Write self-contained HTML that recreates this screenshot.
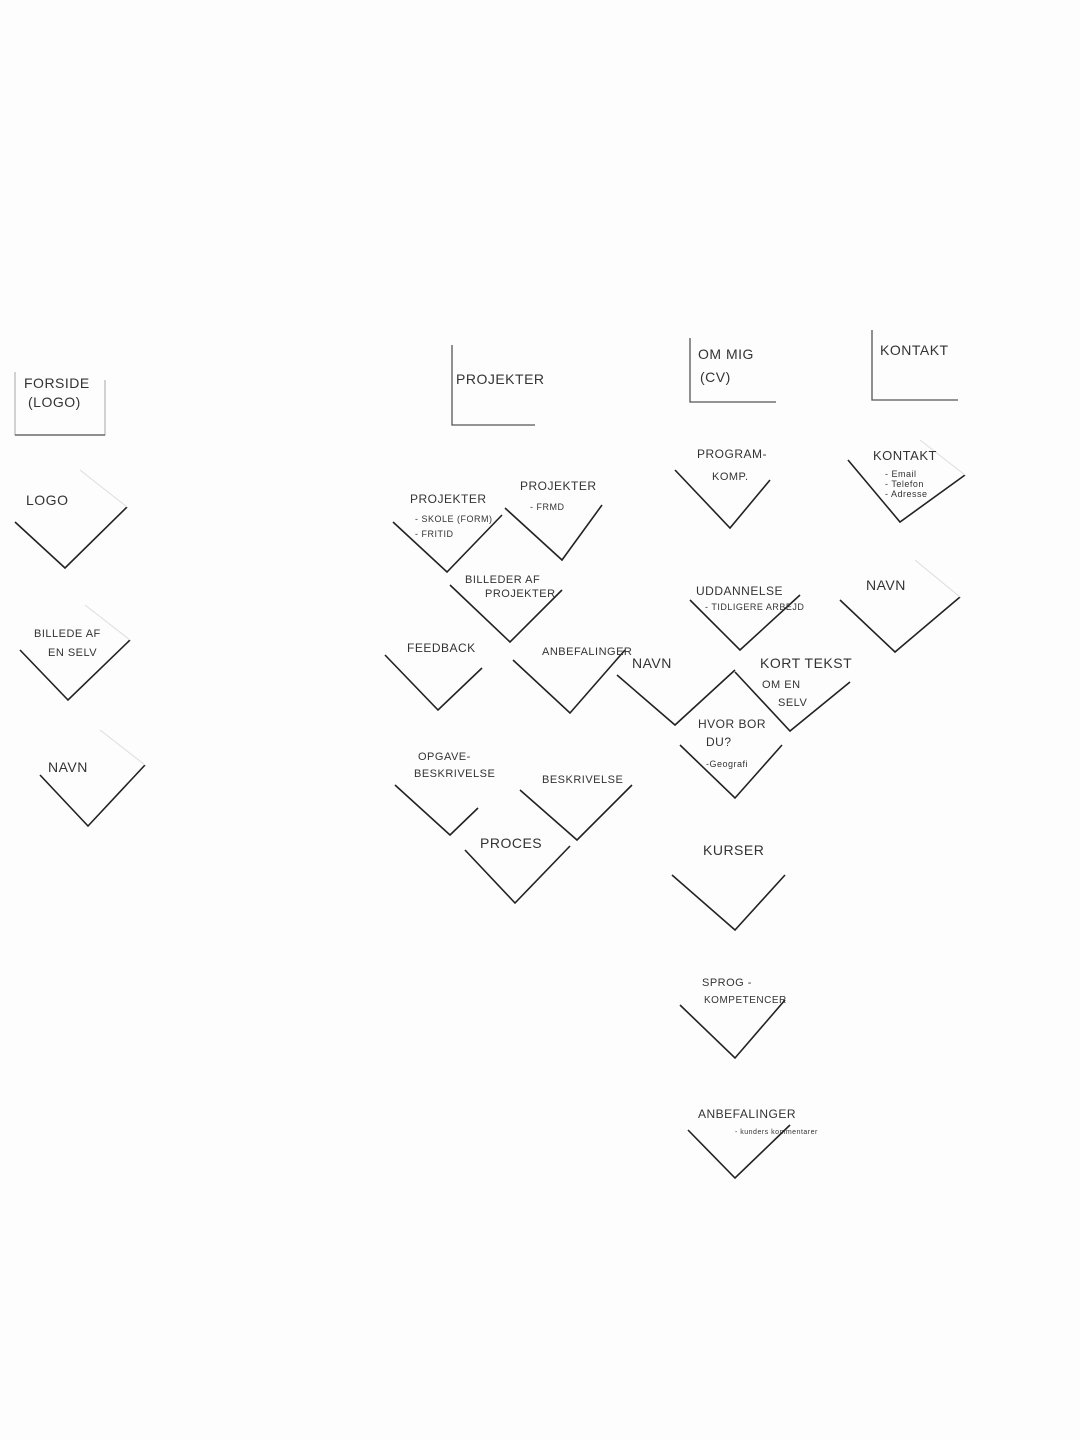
<!DOCTYPE html>
<html><head><meta charset="utf-8"><style>
html,body{margin:0;padding:0;background:#fdfdfd;}
svg{display:block}
text{font-family:"Liberation Sans",sans-serif;fill:#333;font-size:14px;letter-spacing:0.5px}
.s{font-size:9px}
</style></head><body>
<svg width="1080" height="1440" viewBox="0 0 1080 1440">
<rect width="1080" height="1440" fill="#fdfdfd"/>
<g stroke="#555" stroke-width="1.3" fill="none">
<!-- header boxes -->
<path d="M15 372V435H105V380" stroke="#bbb"/>
<path d="M15 435H105"/>
<path d="M452 345V425H535" />
<path d="M690 338V402H776"/>
<path d="M872 330V400H958"/>
</g>
<g stroke="#222" stroke-width="1.6" fill="none">
<path d="M15 522L65 568L127 507"/>
<path d="M20 650L68 700L130 640"/>
<path d="M40 775L88 826L145 765"/>
<path d="M393 522L447 572L502 515"/>
<path d="M505 508L562 560L602 505"/>
<path d="M450 585L510 642L562 590"/>
<path d="M385 655L438 710L482 668"/>
<path d="M513 660L570 713L625 650"/>
<path d="M395 785L450 835L478 808"/>
<path d="M520 790L577 840L632 785"/>
<path d="M465 850L515 903L570 846"/>
<path d="M675 470L730 528L770 480"/>
<path d="M690 600L740 650L800 595"/>
<path d="M617 675L675 725L735 670"/>
<path d="M735 672L790 731L850 682"/>
<path d="M680 745L735 798L782 745"/>
<path d="M672 875L735 930L785 875"/>
<path d="M680 1005L735 1058L785 1000"/>
<path d="M688 1130L735 1178L790 1125"/>
<path d="M848 460L900 522L965 475"/>
<path d="M840 600L895 652L960 597"/>
</g>
<g stroke="#ddd" stroke-width="1" fill="none">
<path d="M127 507L80 470M130 640L85 605M145 765L100 730M965 475L920 440M960 597L915 560"/>
</g>
<text x="24" y="388">FORSIDE</text><text x="28" y="407">(LOGO)</text>
<text x="456" y="384">PROJEKTER</text>
<text x="698" y="359">OM MIG</text><text x="700" y="382">(CV)</text>
<text x="880" y="355">KONTAKT</text>
<text x="26" y="505" font-size="16">LOGO</text>
<text x="34" y="637" class="s" style="font-size:11px">BILLEDE AF</text><text x="48" y="656" style="font-size:11px">EN SELV</text>
<text x="48" y="772">NAVN</text>
<text x="410" y="503" style="font-size:12px">PROJEKTER</text><text x="415" y="522" class="s">- SKOLE (FORM)</text><text x="415" y="537" class="s">- FRITID</text>
<text x="520" y="490" style="font-size:12px">PROJEKTER</text><text x="530" y="510" class="s">- FRMD</text>
<text x="465" y="583" style="font-size:11px">BILLEDER AF</text><text x="485" y="597" style="font-size:11px">PROJEKTER</text>
<text x="407" y="652" style="font-size:12px">FEEDBACK</text>
<text x="542" y="655" style="font-size:11px">ANBEFALINGER</text>
<text x="632" y="668">NAVN</text>
<text x="696" y="595" style="font-size:12px">UDDANNELSE</text><text x="705" y="610" class="s">- TIDLIGERE ARBEJD</text>
<text x="697" y="458" style="font-size:12px">PROGRAM-</text><text x="712" y="480" style="font-size:11px">KOMP.</text>
<text x="760" y="668">KORT TEKST</text><text x="762" y="688" style="font-size:11px">OM EN</text><text x="778" y="706" style="font-size:11px">SELV</text>
<text x="698" y="728" style="font-size:12px">HVOR BOR</text><text x="706" y="746" style="font-size:12px">DU?</text><text x="706" y="767" class="s">-Geografi</text>
<text x="418" y="760" style="font-size:11px">OPGAVE-</text><text x="414" y="777" style="font-size:11px">BESKRIVELSE</text>
<text x="542" y="783" style="font-size:11px">BESKRIVELSE</text>
<text x="480" y="848">PROCES</text>
<text x="703" y="855">KURSER</text>
<text x="702" y="986" style="font-size:11px">SPROG -</text><text x="704" y="1003" style="font-size:10px">KOMPETENCER</text>
<text x="698" y="1118" style="font-size:12px">ANBEFALINGER</text><text x="735" y="1134" class="s" style="font-size:7px">- kunders kommentarer</text>
<text x="873" y="460" style="font-size:13px">KONTAKT</text><text x="885" y="477" class="s">- Email</text><text x="885" y="487" class="s">- Telefon</text><text x="885" y="497" class="s">- Adresse</text>
<text x="866" y="590">NAVN</text>
</svg>
</body></html>
